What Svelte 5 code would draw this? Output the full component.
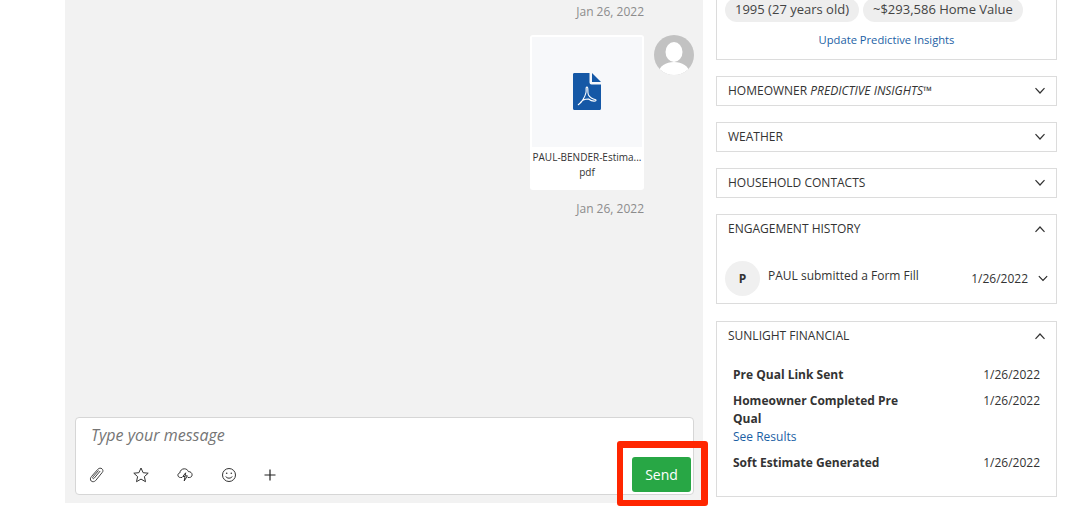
<script>
  const tools = ['clip', 'star', 'cloud', 'smile', 'plus'];
</script>

{#snippet chevron(up)}
  <svg class="chev" class:up viewBox="0 0 12 8" width="12" height="8"><path d="M1.500 1.200 6 6 10.500 1.200" fill="none" stroke="#333" stroke-width="1.200" /></svg>
{/snippet}

<div class="page">
  <main class="chat">
    <div class="thread">
      <div class="date first">Jan 26, 2022</div>
      <div class="message">
        <div class="file">
          <div class="preview">
            <svg viewBox="0 0 28 37" width="28" height="37">
              <path d="M1 0H16.500V9.500Q16.500 11.500 18.500 11.500H28V35.500Q28 37 26.500 37H1.500Q0 37 0 35.500V1.500Q0 0 1 0Z" fill="#1558a6" />
              <path d="M19 0 28 9H19Z" fill="#1558a6" />
              <path d="M5.500 31.500C8.500 30 12 24 13 19.500C13.500 16.500 12.500 14 14 14C15.800 14.200 14 18.500 15.500 22C17.500 25.500 21.500 26.500 22.800 26.800C24 28.500 19.500 29 15.500 26C12 26 8.500 27.500 7 30C6 31.500 4.800 32 5.500 31.500Z" fill="none" stroke="#fff" stroke-width="1.100" />
            </svg>
          </div>
          <div class="fname">PAUL-BENDER-Estima...</div>
          <div class="fext">pdf</div>
        </div>
        <svg class="avatar" viewBox="0 0 40 40" width="40" height="40">
          <defs><clipPath id="av"><circle cx="20" cy="20" r="20" /></clipPath></defs>
          <g clip-path="url(#av)">
            <rect width="40" height="40" fill="#c2c2c2" />
            <ellipse cx="20" cy="17" rx="8.500" ry="10" fill="#fff" />
            <ellipse cx="20" cy="37" rx="15" ry="10" fill="#fff" />
          </g>
        </svg>
      </div>
      <div class="date">Jan 26, 2022</div>
    </div>

    <div class="composer">
      <div class="placeholder">Type your message</div>
      <div class="toolbar">
        <div class="tools">
          {#each tools as t}
            <span class="tool">
              {#if t === 'clip'}
                <svg viewBox="0 0 16 16" width="16" height="16" fill="none" stroke="#444" stroke-width="1"><path d="M13.200 5.500 6.700 13.500C5.300 15 3.200 15 2.200 14C1 12.800 1.200 11 2.400 9.600L8.800 2.300C10 1 11.800 .8 13 1.800C14.200 2.900 14.200 4.500 13.200 5.500ZM11.200 4 5.200 11.200C4.700 11.800 4 11.700 3.800 11.300C3.500 10.900 3.600 10.400 4 9.900L9.500 3.500" /></svg>
              {:else if t === 'star'}
                <svg viewBox="0 0 16 16" width="16" height="16" fill="none" stroke="#333" stroke-width="1"><path d="M8 1 10.100 5.700 15.200 6.200 11.400 9.600 12.500 14.700 8 12.100 3.500 14.700 4.600 9.600 .8 6.200 5.900 5.700Z" stroke-linejoin="round" /></svg>
              {:else if t === 'cloud'}
                <svg viewBox="0 0 16 16" width="16" height="16" fill="none" stroke="#333" stroke-width="1"><path d="M5.200 10.500H3.400C1.900 10.500 .9 9.400 .9 8.100C.9 6.900 1.800 6 2.900 5.900C3 3.700 4.800 1.800 7.300 1.800C9.300 1.800 10.800 3 11.400 4.600C13.400 4.500 15.100 5.900 15.100 7.800C15.100 9.400 13.900 10.500 12.300 10.500H10.800" /><path d="M8.700 5.800 5.800 9.500H8L7.200 14 10.400 8.800H8.100Z" stroke-linejoin="round" /></svg>
              {:else if t === 'smile'}
                <svg viewBox="0 0 16 16" width="16" height="16" fill="none" stroke="#333" stroke-width="1"><circle cx="8" cy="8" r="6.500" /><circle cx="5.700" cy="6.300" r=".8" fill="#333" stroke="none" /><circle cx="10.300" cy="6.300" r=".8" fill="#333" stroke="none" /><path d="M4.800 9.500C5.800 11.700 10.200 11.700 11.200 9.500" /></svg>
              {:else}
                <svg viewBox="0 0 16 16" width="16" height="16" fill="none" stroke="#222" stroke-width="1.200"><path d="M5 2.500V13.500M-.5 8H10.500" /></svg>
              {/if}
            </span>
          {/each}
        </div>
        <button class="send">Send</button>
      </div>
    </div>
    <div class="highlight"></div>
  </main>

  <aside class="side">
    <section class="card insights">
      <div class="chips">
        <span class="chip">1995 (27 years old)</span>
        <span class="chip">~$293,586 Home Value</span>
      </div>
      <a class="update">Update Predictive Insights</a>
    </section>

    <section class="card"><header>
      <span>HOMEOWNER <em>PREDICTIVE INSIGHTS</em>™</span>{@render chevron(false)}
    </header></section>
    <section class="card"><header><span>WEATHER</span>{@render chevron(false)}</header></section>
    <section class="card"><header><span>HOUSEHOLD CONTACTS</span>{@render chevron(false)}</header></section>

    <section class="card engagement">
      <header><span>ENGAGEMENT HISTORY</span>{@render chevron(true)}</header>
      <div class="event">
        <span class="initial">P</span>
        <span class="etext">PAUL submitted a Form Fill</span>
        <span class="edate">1/26/2022</span>
        <svg viewBox="0 0 12 8" width="10" height="7"><path d="M1 1.200 6 6.400 11 1.200" fill="none" stroke="#222" stroke-width="1.300" /></svg>
      </div>
    </section>

    <section class="card sunlight">
      <header><span>SUNLIGHT FINANCIAL</span>{@render chevron(true)}</header>
      <div class="rows">
        <div class="row"><b>Pre Qual Link Sent</b><span>1/26/2022</span></div>
        <div class="row">
          <div class="cell">
            <b>Homeowner Completed Pre Qual</b>
            <a>See Results</a>
          </div>
          <span>1/26/2022</span>
        </div>
        <div class="row"><b>Soft Estimate Generated</b><span>1/26/2022</span></div>
      </div>
    </section>
  </aside>
</div>

<style>
  :global(body) {
    margin: 0;
    background: #fff;
  }
  .page {
    display: flex;
    width: 1066px;
    height: 507px;
    overflow: hidden;
    font-family: "Open Sans", sans-serif;
    font-size: 12px;
    color: #333;
    line-height: 18px;
  }
  .chat {
    position: relative;
    box-sizing: border-box;
    flex: none;
    display: flex;
    flex-direction: column;
    justify-content: space-between;
    width: 638px;
    height: 503px;
    margin-left: 65px;
    padding: 0 9px 8px 10px;
    background: #f2f2f2;
  }
  .thread {
    display: flex;
    flex-direction: column;
    align-items: flex-end;
  }
  .date {
    margin-right: 50px;
    color: #8c8c8c;
    line-height: 16px;
    font-size: 12px;
    margin-top: 11px;
  }
  .date.first {
    margin-top: 4px;
  }
  .message {
    display: flex;
    gap: 10px;
    margin-top: 15px;
  }
  .avatar {
    flex: none;
  }
  .file {
    box-sizing: border-box;
    width: 114px;
    height: 155px;
    background: #fff;
    border-radius: 3px;
    text-align: center;
    font-size: 10px;
    line-height: 15px;
    padding: 2px;
    color: #333;
  }
  .preview {
    display: flex;
    align-items: center;
    justify-content: center;
    height: 110px;
    padding-bottom: 2px;
    box-sizing: border-box;
    margin: 0 0 3px;
    background: #f7f8fa;
  }
  .fname {
    white-space: nowrap;
  }
  .composer {
    box-sizing: border-box;
    height: 78px;
    background: #fff;
    border: 1px solid #d6d6d6;
    border-radius: 4px;
    display: flex;
    flex-direction: column;
    justify-content: space-between;
  }
  .placeholder {
    padding: 6px 15px 0;
    font-style: italic;
    font-size: 16px;
    line-height: 22px;
    color: #757575;
  }
  .toolbar {
    display: flex;
    align-items: center;
    justify-content: space-between;
    padding: 0 2px 2px 13px;
  }
  .tools {
    display: flex;
    gap: 28px;
    margin-top: 1px;
  }
  .tool {
    display: flex;
    width: 16px;
    height: 16px;
  }
  .tool svg {
    overflow: visible;
  }
  .send {
    width: 59px;
    height: 35px;
    border: 0;
    border-radius: 3px;
    background: #28a745;
    color: #fff;
    font: 14px "Open Sans", sans-serif;
    padding: 0;
  }
  .highlight {
    position: absolute;
    left: 552px;
    top: 441px;
    box-sizing: border-box;
    width: 91px;
    height: 65px;
    border-style: solid;
    border-color: #ff2600;
    border-width: 7px 7px 6px 6px;
    border-radius: 3px;
  }
  .side {
    flex: none;
    display: flex;
    flex-direction: column;
    gap: 16px;
    width: 341px;
    margin-left: 13px;
  }
  .card {
    box-sizing: border-box;
    border: 1px solid #dcdcdc;
    flex: none;
  }
  .card header {
    display: flex;
    align-items: center;
    justify-content: space-between;
    height: 28px;
    padding: 0 10px 0 11px;
  }
  .chev.up {
    transform: rotate(180deg);
  }
  .insights {
    height: 60px;
    border-top: 0;
    text-align: center;
    font-size: 11.200px;
  }
  .chips {
    display: flex;
    gap: 4px;
    margin: -2px 0 0 8px;
    height: 24px;
  }
  .chip {
    padding: 0 10px;
    background: #eee;
    border-radius: 12px;
    font-size: 13px;
    line-height: 22px;
    color: #444;
    white-space: nowrap;
  }
  .update {
    display: block;
    margin-top: 10px;
    color: #1c5fa5;
    line-height: 16px;
  }
  .engagement {
    height: 90px;
  }
  .event {
    display: flex;
    align-items: center;
    margin-top: 18px;
    padding: 0 8px;
  }
  .initial {
    flex: none;
    display: flex;
    align-items: center;
    justify-content: center;
    width: 35px;
    height: 35px;
    border-radius: 50%;
    background: #f0f0f0;
    font-weight: 700;
    font-size: 12px;
  }
  .etext {
    flex: 1;
    margin: -5px 0 0 8px;
  }
  .edate {
    margin-right: 10px;
  }
  .sunlight {
    height: 176px;
    margin-top: 1px;
  }
  .rows {
    display: flex;
    flex-direction: column;
    gap: 8px;
    padding: 16px 16px 0;
  }
  .row {
    display: flex;
    justify-content: space-between;
    align-items: flex-start;
  }
  .row b {
    font-weight: 700;
  }
  .cell {
    width: 190px;
  }
  .cell a {
    display: block;
    color: #1c5fa5;
  }
</style>
